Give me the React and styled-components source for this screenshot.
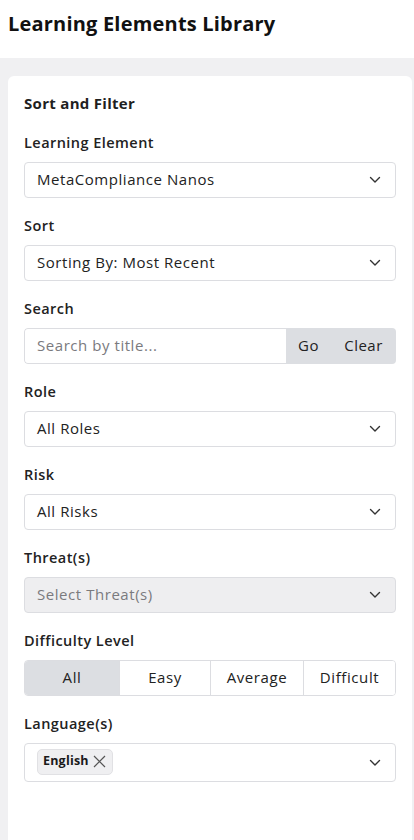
import React from "react";
import styled, { createGlobalStyle } from "styled-components";

const GlobalStyle = createGlobalStyle`
	body {
		margin: 0;
		background: #f0f0f2;
		font-family: "Open Sans", "Liberation Sans", sans-serif;
		color: #1f1f1f;
	}
`;

const Header = styled.header`
	background: #ffffff;
	height: 58px;
	padding: 12px 8px 0;
	box-sizing: border-box;
`;

const Title = styled.h1`
	margin: 0;
	font-size: 20px;
	line-height: 24px;
	font-weight: 700;
	color: #111;
	letter-spacing: 0.2px;
`;

const Main = styled.main`
	padding: 18px 2px 0 8px;
`;

const Card = styled.section`
	background: #fff;
	border-radius: 6px 6px 0 0;
	min-height: 764px;
	padding: 17px 16px 16px;
	box-sizing: border-box;
`;

const CardTitle = styled.h2`
	margin: 0 0 20px;
	font-size: 15px;
	line-height: 20px;
	font-weight: 700;
	letter-spacing: 0.3px;
`;

const Field = styled.div`
	margin-bottom: 18px;
`;

const Label = styled.div`
	font-size: 14.5px;
	line-height: 20px;
	font-weight: 600;
	letter-spacing: 0.45px;
	margin-bottom: 9px;
	color: #222;
`;

const SelectBox = styled.div`
	display: flex;
	align-items: center;
	justify-content: space-between;
	height: ${(p) => (p.$tall ? "39px" : "36px")};
	padding: 0 14px 0 12px;
	box-sizing: border-box;
	border: 1px solid #dcdde1;
	border-radius: 4px;
	background: ${(p) => (p.$disabled ? "#eeeef0" : "#fff")};
	font-size: 15px;
	letter-spacing: 0.55px;
	line-height: 20px;
	color: ${(p) => (p.$disabled ? "#7a7a7e" : "#222")};

	& > span {
		margin-top: -2px;
	}
`;

const Chevron = () => (
	<svg width="12" height="8" viewBox="0 0 12 8" fill="none">
		<polyline
			points="1.5,1.5 6,6 10.5,1.5"
			stroke="#333"
			strokeWidth="1.4"
			strokeLinecap="round"
			strokeLinejoin="round"
		/>
	</svg>
);

const SearchGroup = styled.div`
	display: flex;
	height: 36px;
	border-radius: 4px;
	overflow: hidden;
`;

const SearchInput = styled.div`
	flex: 1;
	display: flex;
	align-items: center;
	padding: 0 12px 2px;
	border: 1px solid #dcdde1;
	border-right: none;
	border-radius: 4px 0 0 4px;
	font-size: 15px;
	letter-spacing: 0.55px;
	color: #7a7a7e;
`;

const GroupButton = styled.div`
	display: flex;
	align-items: center;
	justify-content: center;
	width: ${(p) => p.$w}px;
	padding-bottom: 2px;
	box-sizing: border-box;
	background: #dcdee2;
	font-size: 15px;
	font-weight: 500;
	letter-spacing: 0.5px;
	color: #222;
`;

const Segmented = styled.div`
	display: grid;
	grid-template-columns: 94px 91px 93px 1fr;
	height: 36px;
	box-sizing: border-box;
	border: 1px solid #dcdde1;
	border-radius: 4px;
	overflow: hidden;
`;

const Segment = styled.div`
	display: flex;
	align-items: center;
	justify-content: center;
	padding-bottom: 2px;
	font-size: 15px;
	font-weight: 500;
	letter-spacing: 0.6px;
	background: ${(p) => (p.$active ? "#dcdee2" : "#fff")};
	border-left: ${(p) => (p.$first ? "none" : "1px solid #dcdde1")};
	color: #222;
`;

const Chip = styled.span`
	display: inline-flex;
	align-items: center;
	gap: 4px;
	height: 26px;
	padding: 0 6px 1px 5px;
	box-sizing: border-box;
	background: #efeff1;
	border: 1px solid #e1e1e4;
	border-radius: 5px;
	font-size: 12.5px;
	font-weight: 700;
	letter-spacing: 0.2px;
	color: #1a1a1a;
`;

const CloseIcon = () => (
	<svg width="13" height="13" viewBox="0 0 13 13">
		<path d="M1 1L12 12M12 1L1 12" stroke="#555" strokeWidth="1.2" />
	</svg>
);

const ChipSelect = styled(SelectBox)`
	padding-left: 12px;
`;

const selects = [
	{ label: "Learning Element", value: "MetaCompliance Nanos" },
	{ label: "Sort", value: "Sorting By: Most Recent" },
];

const App = () => {
	return (
		<>
			<GlobalStyle />
			<Header>
				<Title>Learning Elements Library</Title>
			</Header>
			<Main>
				<Card>
					<CardTitle>Sort and Filter</CardTitle>
					{selects.map((s) => (
						<Field key={s.label}>
							<Label>{s.label}</Label>
							<SelectBox>
								<span>{s.value}</span>
								<Chevron />
							</SelectBox>
						</Field>
					))}
					<Field>
						<Label>Search</Label>
						<SearchGroup>
							<SearchInput>Search by title...</SearchInput>
							<GroupButton $w={45}>Go</GroupButton>
							<GroupButton $w={65}>Clear</GroupButton>
						</SearchGroup>
					</Field>
					<Field>
						<Label>Role</Label>
						<SelectBox>
							<span>All Roles</span>
							<Chevron />
						</SelectBox>
					</Field>
					<Field>
						<Label>Risk</Label>
						<SelectBox>
							<span>All Risks</span>
							<Chevron />
						</SelectBox>
					</Field>
					<Field>
						<Label>Threat(s)</Label>
						<SelectBox $disabled>
							<span>Select Threat(s)</span>
							<Chevron />
						</SelectBox>
					</Field>
					<Field>
						<Label>Difficulty Level</Label>
						<Segmented>
							<Segment $active $first>All</Segment>
							<Segment>Easy</Segment>
							<Segment>Average</Segment>
							<Segment>Difficult</Segment>
						</Segmented>
					</Field>
					<Field>
						<Label>Language(s)</Label>
						<ChipSelect $tall>
							<Chip>
								English
								<CloseIcon />
							</Chip>
							<Chevron />
						</ChipSelect>
					</Field>
				</Card>
			</Main>
		</>
	);
};

export default App;
